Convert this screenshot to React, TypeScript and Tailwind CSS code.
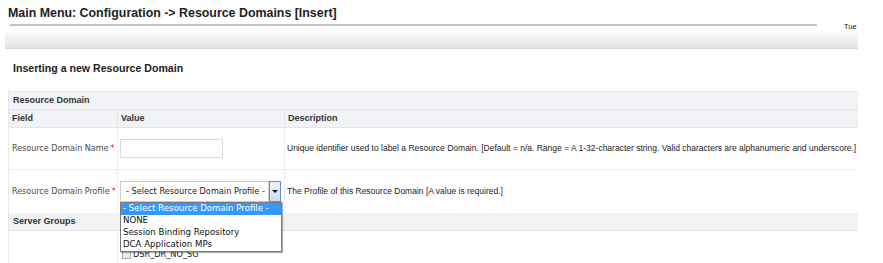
import React from "react";

const hdr = "font-['Liberation_Sans',Arial,sans-serif] font-bold text-[9px] text-[#333]";
const lbl = "font-['DejaVu_Sans',Tahoma,sans-serif] text-[8px] text-[#4a4a4a]";
const desc = "font-['Liberation_Sans',Arial,sans-serif] text-[8.5px] text-[#222]";
const tah = "font-['DejaVu_Sans',Tahoma,sans-serif] text-[8.2px]";
const tahItem = "font-['DejaVu_Sans',Tahoma,sans-serif] text-[8.6px]";

export default function App() {
  return (
    <div className="w-[883px] h-[263px] bg-white overflow-hidden relative">
      <div className="pl-[8px] pt-[6px] h-[20px] font-['Liberation_Sans',Arial,sans-serif] font-bold text-[12.4px] leading-[14px] text-[#222]">
        Main Menu: Configuration -&gt; Resource Domains [Insert]
      </div>
      <div className="flex items-start h-[12px]">
        <div className="ml-[10px] w-[807px] mt-[4px] h-[2px] bg-[#c4c4c4] shrink-0" />
        <div className="ml-[27px] mt-[1px] font-['Liberation_Sans',Arial,sans-serif] text-[7.5px] text-[#222]">Tue</div>
      </div>
      <div className="ml-[5px] w-[853px] h-[17px] bg-gradient-to-b from-[#fafafa] to-[#e4e4e4] border-b border-[#d4d4d4]" />
      <div className="pl-[13px] pt-[12px] h-[42px] font-['Liberation_Sans',Arial,sans-serif] font-bold text-[10.6px] leading-[14px] text-[#222]">
        Inserting a new Resource Domain
      </div>
      <div className="ml-[8px] w-[850px] border-t border-l border-[#e6e8ec]">
        <div className={`h-[18px] bg-[#f1f3f6] border-b border-[#e2e4e8] flex items-center pl-[4px] ${hdr}`}>Resource Domain</div>
        <div className={`h-[18px] bg-[#f1f3f6] border-b border-[#e2e4e8] flex ${hdr}`}>
          <div className="w-[109px] shrink-0 border-r border-[#e2e4e8] flex items-center pl-[3px]">Field</div>
          <div className="w-[167px] shrink-0 border-r border-[#e2e4e8] flex items-center pl-[3px]">Value</div>
          <div className="flex-1 min-w-0 flex items-center pl-[3px]">Description</div>
        </div>
        <div className="h-[42px] border-b border-[#eceef1] flex">
          <div className={`w-[109px] shrink-0 border-r border-[#eceef1] flex items-center pl-[3px] ${lbl}`}>
            Resource Domain Name <span className="text-[#e02020] ml-[2px]">*</span>
          </div>
          <div className="w-[167px] shrink-0 border-r border-[#eceef1] flex items-center pl-[2px]">
            <div className="w-[103px] h-[19px] border border-[#d8dadd] bg-white" />
          </div>
          <div className={`flex-1 min-w-0 flex items-center pl-[2px] whitespace-nowrap ${desc}`}>
            Unique identifier used to label a Resource Domain. [Default = n/a. Range = A 1-32-character string. Valid characters are alphanumeric and underscore.]
          </div>
        </div>
        <div className="h-[43px] flex">
          <div className={`w-[109px] shrink-0 border-r border-[#eceef1] flex items-center pl-[3px] ${lbl}`}>
            Resource Domain Profile <span className="text-[#e02020] ml-[2px]">*</span>
          </div>
          <div className="w-[167px] shrink-0 border-r border-[#eceef1] flex items-center pl-[2px]">
            <div className="relative flex w-[161px] h-[21px]">
              <div className={`flex-1 border border-[#c8cace] bg-white flex items-center pl-[5px] text-[#222] whitespace-nowrap ${tah}`}>
                - Select Resource Domain Profile -
              </div>
              <div className="w-[12px] border border-[#6a8fb8] bg-gradient-to-b from-[#eaf3fc] to-[#c8def4] flex items-center justify-center">
                <div className="w-0 h-0 border-l-[3px] border-r-[3px] border-t-[3px] border-l-transparent border-r-transparent border-t-[#111]" />
              </div>
              <div className={`absolute left-0 top-[21px] w-[162px] bg-white border border-[#7a7a7a] shadow-[1px_1px_1px_rgba(0,0,0,0.3)] z-10 text-[#111] leading-[11.6px] ${tahItem}`}>
                <div className="bg-[#3399ff] text-white pl-[2px] h-[12px] whitespace-nowrap">- Select Resource Domain Profile -</div>
                <div className="pl-[2px] h-[12px]">NONE</div>
                <div className="pl-[2px] h-[12px]">Session Binding Repository</div>
                <div className="pl-[2px] h-[12px]">DCA Application MPs</div>
              </div>
            </div>
          </div>
          <div className={`flex-1 min-w-0 flex items-center pl-[2px] ${desc}`}>
            The Profile of this Resource Domain [A value is required.]
          </div>
        </div>
        <div className={`h-[18px] bg-[#f1f3f6] border-b border-[#e2e4e8] flex items-center pl-[4px] ${hdr}`}>Server Groups</div>
        <div className="h-[40px] flex">
          <div className="w-[109px] shrink-0 border-r border-[#eceef1]" />
          <div className="flex items-start pl-[4px] pt-[19px]">
            <div className="w-[9px] h-[9px] border border-[#aaa] bg-[#eee]" />
            <div className={`ml-[2px] leading-[9px] text-[#222] ${tah}`}>DSR_DR_NO_SG</div>
          </div>
        </div>
      </div>
    </div>
  );
}
